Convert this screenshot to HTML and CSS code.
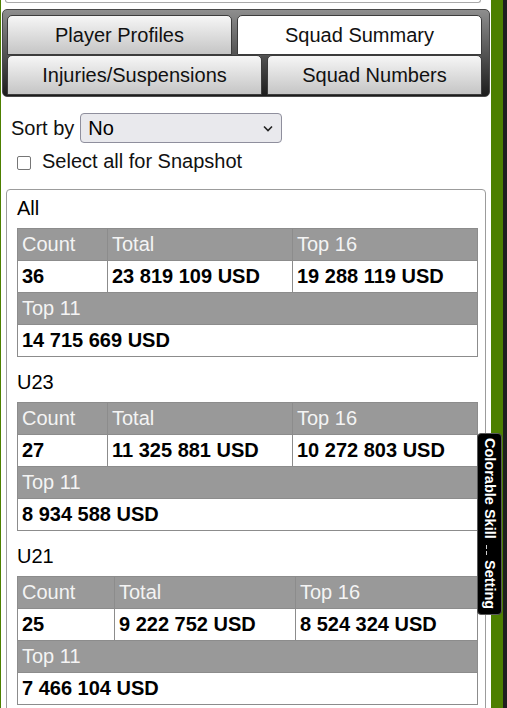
FILE: index.html
```html
<!DOCTYPE html>
<html lang="en">
<head>
<meta charset="utf-8">
<title>Squad Summary</title>
<link rel="stylesheet" href="styles.css">
</head>
<body>
<div class="frame">
  <div class="panel">
    <div class="prev"></div>
    <div class="tabs">
      <div class="tabrow">
        <div class="tab">Player Profiles</div>
        <div class="tab active">Squad Summary</div>
      </div>
      <div class="tabrow">
        <div class="tab">Injuries/Suspensions</div>
        <div class="tab">Squad Numbers</div>
      </div>
    </div>
    <div class="sortrow">
      <span class="sortlabel">Sort by</span>
      <div class="selectwrap">
        <select class="sortselect"><option>No</option></select>
        <svg class="chev" width="10" height="7" viewBox="0 0 10 7"><path d="M1 1.5 L5 5.5 L9 1.5" fill="none" stroke="#222" stroke-width="1.6"/></svg>
      </div>
    </div>
    <label class="snap"><input type="checkbox" class="cb"><span>Select all for Snapshot</span></label>
    <div class="summary">
      <div class="group">
        <div class="glabel">All</div>
        <table class="stats wide">
          <colgroup><col class="c1"><col class="c2"><col class="c3"></colgroup>
          <tr class="head"><td>Count</td><td>Total</td><td>Top 16</td></tr>
          <tr class="val"><td>36</td><td>23 819 109 USD</td><td>19 288 119 USD</td></tr>
          <tr class="head"><td colspan="3">Top 11</td></tr>
          <tr class="val"><td colspan="3">14 715 669 USD</td></tr>
        </table>
      </div>
      <div class="group">
        <div class="glabel">U23</div>
        <table class="stats wide">
          <colgroup><col class="c1"><col class="c2"><col class="c3"></colgroup>
          <tr class="head"><td>Count</td><td>Total</td><td>Top 16</td></tr>
          <tr class="val"><td>27</td><td>11 325 881 USD</td><td>10 272 803 USD</td></tr>
          <tr class="head"><td colspan="3">Top 11</td></tr>
          <tr class="val"><td colspan="3">8 934 588 USD</td></tr>
        </table>
      </div>
      <div class="group">
        <div class="glabel">U21</div>
        <table class="stats narrow">
          <colgroup><col class="c1"><col class="c2"><col class="c3"></colgroup>
          <tr class="head"><td>Count</td><td>Total</td><td>Top 16</td></tr>
          <tr class="val"><td>25</td><td>9 222 752 USD</td><td>8 524 324 USD</td></tr>
          <tr class="head"><td colspan="3">Top 11</td></tr>
          <tr class="val"><td colspan="3">7 466 104 USD</td></tr>
        </table>
      </div>
    </div>
  </div>
</div>
<div class="sidetab"><span class="sidetext">Colorable Skill</span><span class="sep"></span><span class="sidetext">Setting</span></div>
</body>
</html>
```
FILE: styles.css
```css
html, body {
  margin: 0;
  padding: 0;
}
body {
  background: #1f1f1f;
  font-family: "Liberation Sans", Arial, sans-serif;
  color: #000;
  width: 507px;
  height: 708px;
  overflow: hidden;
  position: relative;
}
.frame {
  width: 503px;
  height: 708px;
  box-sizing: border-box;
  padding: 0 12px 0 1px;
  background: #4d7f00;
  overflow: hidden;
}
.panel {
  background: #fff;
  height: 708px;
  display: flow-root;
}
.prev {
  height: 2px;
  margin: 0 10px 0 4px;
  border: 1px solid #a9a9a9;
  border-top: none;
  border-radius: 0 0 4px 4px;
}
.tabs {
  margin: 6px 1px 0 1px;
  padding: 5px 7px 1px 4px;
  border: 1px solid #4a4a4a;
  border-radius: 5px;
  background: linear-gradient(#8e8e8e, #1c1c1c);
}
.tabrow {
  display: flex;
  gap: 5px;
}
.tab {
  flex: 1 1 auto;
  height: 40px;
  box-sizing: border-box;
  border: 1px solid #3c3c3c;
  border-radius: 5px 5px 0 0;
  background: linear-gradient(#f6f6f6, #c5c5c5);
  font-size: 20px;
  line-height: 38px;
  text-align: center;
  color: #111;
  white-space: nowrap;
}
.tab.active {
  background: #fff;
}
.sortrow {
  display: flex;
  align-items: center;
  gap: 6px;
  margin: 16px 0 0 10px;
  font-size: 20px;
  color: #111;
}
.selectwrap {
  position: relative;
  width: 202px;
  height: 30px;
}
.sortselect {
  appearance: none;
  -webkit-appearance: none;
  width: 202px;
  height: 30px;
  box-sizing: border-box;
  margin: 0;
  padding: 0 20px 0 7px;
  border: 1px solid #8f8f9d;
  border-radius: 4px;
  background: #e9e9ed;
  font-family: "Liberation Sans", Arial, sans-serif;
  font-size: 20px;
  color: #000;
}
.chev {
  position: absolute;
  right: 9px;
  top: 12px;
  pointer-events: none;
}
.snap {
  display: flex;
  align-items: center;
  margin: 7px 0 0 16px;
  font-size: 20px;
  line-height: 23px;
  color: #111;
}
.cb {
  appearance: none;
  -webkit-appearance: none;
  width: 14px;
  height: 14px;
  box-sizing: border-box;
  margin: 2px 11px 0 0;
  border: 1px solid #767676;
  border-radius: 2px;
  background: #fff;
}
.summary {
  margin: 16px 5px 0 5px;
  border: 1px solid #9c9c9c;
  border-radius: 4px;
  padding: 0 8px 0 10px;
  height: 560px;
}
.group {
  padding-top: 7px;
}
.glabel {
  font-size: 20px;
  line-height: 23px;
  margin-bottom: 8px;
}
.stats {
  border-collapse: collapse;
  table-layout: fixed;
  width: 460px;
  margin-bottom: 7px;
}
.stats td {
  border: 1px solid #8c8c8c;
  padding: 0 4px;
  height: 31px;
  font-size: 20px;
  line-height: 23px;
  white-space: nowrap;
  overflow: hidden;
}
.stats .head td {
  background: #999;
  color: #f4f4f4;
}
.stats .val td {
  background: #fff;
  font-weight: bold;
  color: #000;
}
.wide .c1 { width: 90px; }
.wide .c2 { width: 185px; }
.wide .c3 { width: 185px; }
.narrow .c1 { width: 97px; }
.narrow .c2 { width: 181px; }
.narrow .c3 { width: 182px; }
.sidetab {
  position: absolute;
  left: 477px;
  top: 433px;
  width: 25px;
  height: 182px;
  box-sizing: border-box;
  background: #000;
  border: 1px solid #5a5a5a;
  border-radius: 4px;
  writing-mode: vertical-rl;
  color: #fff;
  font-weight: bold;
  font-size: 14.5px;
  line-height: 23px;
  padding-top: 4px;
  display: flex;
  align-items: center;
}
.sidetab .sep {
  width: 1px;
  height: 10px;
  margin: 6px 7px 0 0;
  background: linear-gradient(#d0d0d0 0 40%, transparent 40% 60%, #d0d0d0 60%);
}
.sidetab .sep + .sidetext {
  margin-top: 5px;
}
```
